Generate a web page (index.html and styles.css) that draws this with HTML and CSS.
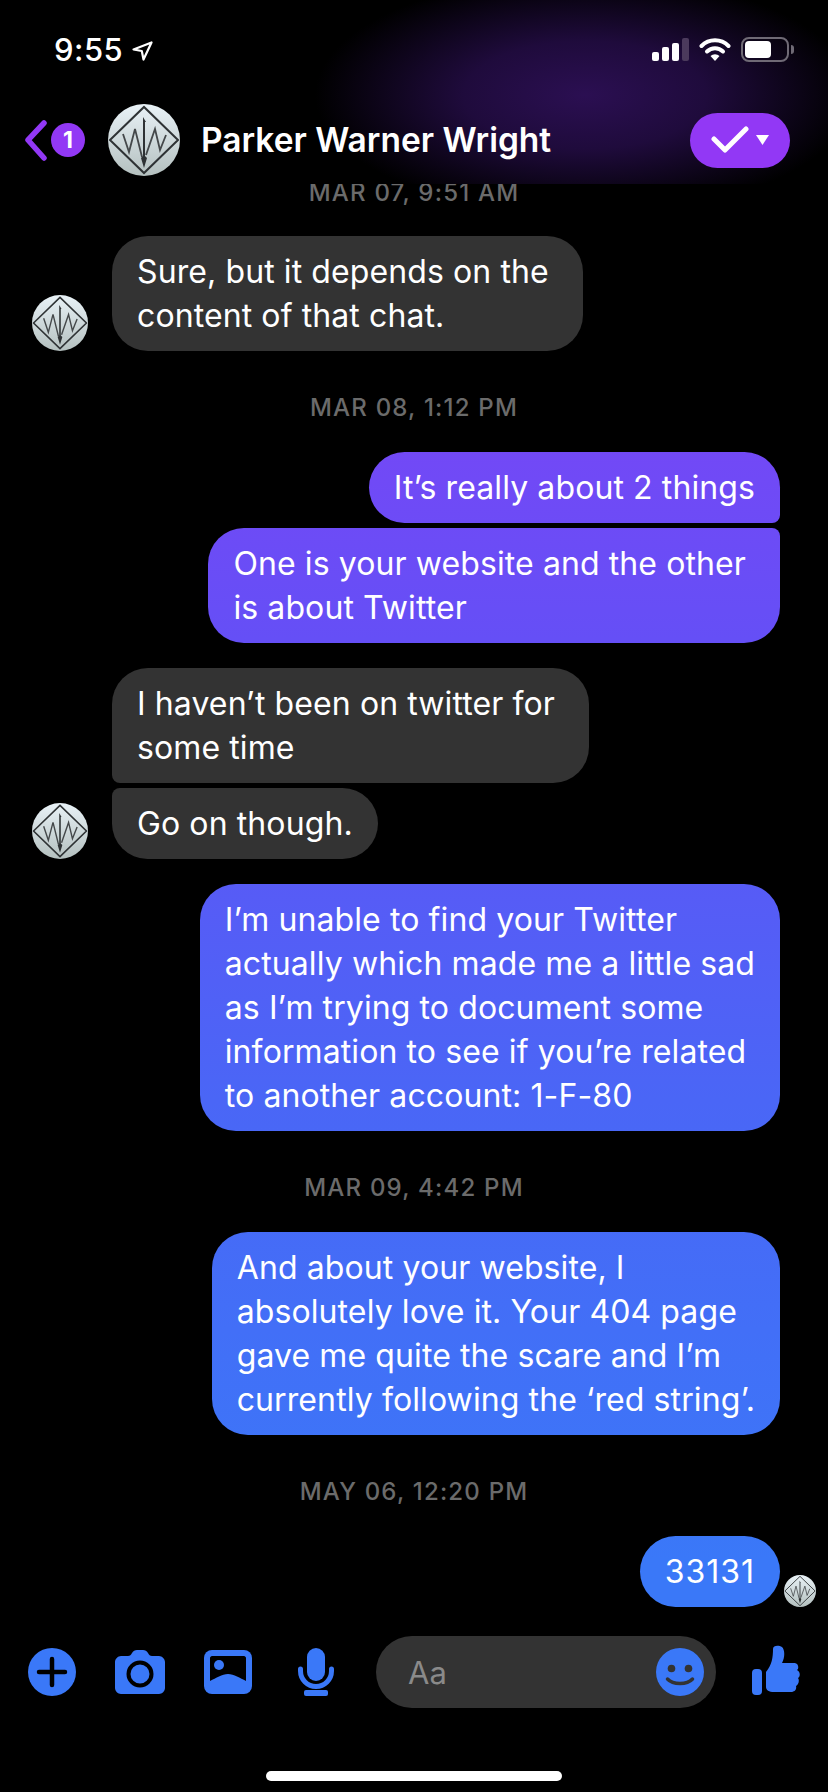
FILE: index.html
```html
<!DOCTYPE html>
<html lang="en">
<head>
  <meta charset="UTF-8">
  <meta name="viewport" content="width=device-width, initial-scale=1.0">
  <title>Parker Warner Wright</title>
  <link rel="stylesheet" href="styles.css">
</head>
<body>
  <svg class="defs" width="0" height="0" aria-hidden="true">
    <defs>
      <linearGradient id="logoFill" x1="0" y1="0" x2="0" y2="1">
        <stop offset="0" stop-color="#e9f2f7"/>
        <stop offset="1" stop-color="#b4c0bf"/>
      </linearGradient>
      <symbol id="logo" viewBox="0 0 72 72">
        <circle cx="36" cy="36" r="36" fill="url(#logoFill)"/>
        <polygon points="2,36 36,3 70,36 36,69" fill="none" stroke="#2e3234" stroke-width="2"/>
        <polyline points="15,30 21,48 27,25 34,53" fill="none" stroke="#44484a" stroke-width="1.8"/>
        <polyline points="38,51 47,25 52,46 58,31" fill="none" stroke="#44484a" stroke-width="1.8"/>
        <path d="M35 13 L38 18 L37 18 L37 52 L39 54 L36 64 L33 54 L35 52 Z" fill="#2e3234"/>
      </symbol>
    </defs>
  </svg>

  <div class="top">
    <div class="status">
      <div class="clock">
        <span>9:55</span>
        <svg width="21" height="20" viewBox="0 0 21 20"><path d="M1.5 8.5 L19.5 1.5 L11.5 18.5 L9.8 10 Z" fill="none" stroke="#fff" stroke-width="2.2" stroke-linejoin="round"/></svg>
      </div>
      <div class="indicators">
        <div class="signal">
          <i class="bar1"></i><i class="bar2"></i><i class="bar3"></i><i class="bar4"></i>
        </div>
        <svg width="32" height="24" viewBox="0 0 32 24">
          <path d="M2.5 9 A19 19 0 0 1 29.5 9" fill="none" stroke="#fff" stroke-width="4" stroke-linecap="round"/>
          <path d="M8 14.5 A11.5 11.5 0 0 1 24 14.5" fill="none" stroke="#fff" stroke-width="4" stroke-linecap="round"/>
          <path d="M11.5 19 A6.5 6.5 0 0 1 20.500 19 L16 24 Z" fill="#fff"/>
        </svg>
        <div class="battery"><div class="charge"></div></div>
      </div>
    </div>
    <header class="chat-head">
      <svg class="chevron" width="24" height="42" viewBox="0 0 24 42"><polyline points="20,3 4,20 20,38" fill="none" stroke="#9238f5" stroke-width="5.500" stroke-linecap="round" stroke-linejoin="round"/></svg>
      <span class="badge">1</span>
      <svg class="head-avatar"><use href="#logo"/></svg>
      <h1 class="name">Parker Warner Wright</h1>
      <div class="pill">
        <svg width="38" height="28" viewBox="0 0 38 28"><polyline points="3,13 14,24 35,3" fill="none" stroke="#fff" stroke-width="5" stroke-linecap="round" stroke-linejoin="round"/></svg>
        <svg width="13" height="10" viewBox="0 0 13 10"><path d="M0 0 H13 L6.500 10 Z" fill="#fff"/></svg>
      </div>
    </header>
  </div>

  <main class="chat">
    <div class="date first">MAR 07, 9:51 AM</div>
    <div class="row in">
      <svg class="avatar"><use href="#logo"/></svg>
      <div class="bubble grey loose">Sure, but it depends on the<br>content of that chat.</div>
    </div>

    <div class="date">MAR 08, 1:12 PM</div>
    <div class="row out">
      <div class="bubble blue join-below-r">It’s really about 2 things</div>
    </div>
    <div class="row out close">
      <div class="bubble blue loose join-above-r">One is your website and the other<br>is about Twitter</div>
    </div>
    <div class="row in spaced">
      <div class="avatar-gap"></div>
      <div class="bubble grey loose join-below-l">I haven’t been on twitter for<br>some time</div>
    </div>
    <div class="row in close">
      <svg class="avatar"><use href="#logo"/></svg>
      <div class="bubble grey join-above-l">Go on though.</div>
    </div>
    <div class="row out spaced">
      <div class="bubble blue">I’m unable to find your Twitter<br>actually which made me a little sad<br>as I’m trying to document some<br>information to see if you’re related<br>to another account: 1-F-80</div>
    </div>

    <div class="date">MAR 09, 4:42 PM</div>
    <div class="row out">
      <div class="bubble blue">And about your website, I<br>absolutely love it. Your 404 page<br>gave me quite the scare and I’m<br>currently following the ‘red string’.</div>
    </div>

    <div class="date">MAY 06, 12:20 PM</div>
    <div class="row out seen">
      <div class="bubble blue digits">33131</div>
      <svg class="seen-avatar"><use href="#logo"/></svg>
    </div>
  </main>

  <footer class="composer">
    <div class="tool">
      <svg width="48" height="48" viewBox="0 0 48 48"><circle cx="24" cy="24" r="24" fill="#3a78f8"/><path d="M11 24 H37 M24 11 V37" stroke="#000" stroke-width="4.500" stroke-linecap="round"/></svg>
    </div>
    <div class="tool">
      <svg width="50" height="44" viewBox="0 0 50 44"><path d="M6 6 H13 C15 6 16 5 17 3 C18 1 20 0 22 0 H28 C30 0 32 1 33 3 C34 5 35 6 37 6 H44 C47 6 50 9 50 12 V38 C50 41 47 44 44 44 H6 C3 44 0 41 0 38 V12 C0 9 3 6 6 6 Z" fill="#3a78f8"/><circle cx="25" cy="24" r="11.500" fill="none" stroke="#000" stroke-width="4"/></svg>
    </div>
    <div class="tool">
      <svg width="48" height="44" viewBox="0 0 48 44"><rect width="48" height="44" rx="8" fill="#3a78f8"/><path d="M8 6 H40 C41 6 42 7 42 8 V31 C36 28 30 24 24 24 C18 24 12 28 6 31 V8 C6 7 7 6 8 6 Z" fill="#000"/><circle cx="15" cy="15" r="5" fill="#3a78f8"/></svg>
    </div>
    <div class="tool">
      <svg width="36" height="48" viewBox="0 0 36 48"><rect x="9" y="0" width="18" height="33" rx="9" fill="#3a78f8"/><path d="M2.500 21 V23 A15.500 15.500 0 0 0 33.500 23 V21" fill="none" stroke="#3a78f8" stroke-width="5" stroke-linecap="round"/><rect x="6" y="42" width="24" height="6" rx="2" fill="#3a78f8"/></svg>
    </div>
    <div class="input">
      <span class="placeholder">Aa</span>
      <svg width="48" height="48" viewBox="0 0 48 48"><circle cx="24" cy="24" r="24" fill="#3a78f8"/><circle cx="15.500" cy="20.500" r="3.800" fill="#333"/><circle cx="32.500" cy="20.500" r="3.800" fill="#333"/><path d="M11.500 31 C17 37 31 37 36.500 31" fill="none" stroke="#333" stroke-width="3.500" stroke-linecap="round"/></svg>
    </div>
    <div class="like">
      <svg width="48" height="50" viewBox="0 0 48 50"><rect x="0" y="24" width="10" height="26" rx="4" fill="#3a78f8"/><path d="M14 27 C20 20 21 12 21 4 C21 0 27 0 30 2 C33 5 33 12 30 18 L42 18 C47 18 47 24 45 25 C49 27 48 32 46 33 C48 36 46 40 44 41 C45 45 42 47 39 47 L22 47 C17 47 14 45 14 42 Z" fill="#3a78f8"/></svg>
    </div>
  </footer>

  <div class="home-bar"><div class="home-line"></div></div>
</body>
</html>
```

FILE: styles.css
```css
* {
  box-sizing: border-box;
}
html, body {
  margin: 0;
  height: 100%;
}
body {
  display: flex;
  flex-direction: column;
  height: 1792px;
  overflow: hidden;
  background: #000;
  color: #fff;
  font-family: Inter, "Noto Sans", "Liberation Sans", sans-serif;
}
.defs {
  position: absolute;
}

/* top bar */
.top {
  height: 184px;
  flex: none;
  background: radial-gradient(ellipse 270px 120px at 585px 95px, #2b0f52 0%, #1f0b3c 45%, #000 100%);
}
.status {
  display: flex;
  justify-content: space-between;
  align-items: flex-start;
  padding: 32px 39px 0 54px;
  height: 104px;
}
.clock {
  display: flex;
  align-items: center;
  gap: 9px;
  font-size: 31px;
  font-weight: 500;
  letter-spacing: 0.5px;
  line-height: 36px;
}
.clock svg {
  margin-top: 2px;
}
.indicators {
  display: flex;
  align-items: flex-start;
  gap: 10px;
  padding-top: 5px;
}
.signal {
  display: flex;
  align-items: flex-end;
  gap: 3px;
  height: 24px;
}
.signal i {
  display: block;
  width: 7px;
  background: #fff;
  border-radius: 2px;
}
.bar1 { height: 9px; }
.bar2 { height: 14px; }
.bar3 { height: 18px; }
.signal .bar4 { height: 23px; background: #4b3a5c; }
.battery {
  position: relative;
  width: 48px;
  height: 25px;
  padding: 2px;
  border: 2px solid #6f6a75;
  border-radius: 8px;
}
.battery::after {
  content: "";
  position: absolute;
  top: 6px;
  right: -7px;
  width: 3px;
  height: 9px;
  background: #6f6a75;
  border-radius: 0 3px 3px 0;
}
.charge {
  width: 26px;
  height: 17px;
  background: #fff;
  border-radius: 4px;
}
.chat-head {
  display: flex;
  align-items: center;
  height: 72px;
  padding: 0 38px 0 24px;
}
.chevron {
  flex: none;
  margin-top: 1px;
}
.badge {
  flex: none;
  width: 34px;
  height: 34px;
  margin: 0 0 0 3px;
  border-radius: 50%;
  background: #9238f5;
  font-size: 23px;
  font-weight: 700;
  line-height: 34px;
  text-align: center;
}
.head-avatar {
  flex: none;
  width: 72px;
  height: 72px;
  margin-left: 23px;
}
.name {
  flex: 1;
  margin: 0 0 0 21px;
  font-size: 33.500px;
  font-weight: 600;
  white-space: nowrap;
}
.pill {
  display: flex;
  align-items: center;
  justify-content: center;
  gap: 7px;
  flex: none;
  width: 100px;
  height: 55px;
  border-radius: 28px;
  background: #9238f5;
}

/* messages */
.chat {
  flex: 1;
  min-height: 0;
  overflow: hidden;
}
.date {
  height: 30px;
  margin: 42px 0 29px;
  color: #6b6b6b;
  font-size: 24px;
  font-weight: 500;
  letter-spacing: 1.2px;
  line-height: 30px;
  text-align: center;
}
.date.first {
  margin: -6px 0 28px;
}
.row {
  display: flex;
  align-items: flex-end;
  padding: 0 48px 0 32px;
}
.row.out {
  justify-content: flex-end;
}
.row.close {
  margin-top: 5px;
}
.row.spaced {
  margin-top: 25px;
}
.row.seen {
  gap: 4px;
  padding-right: 12px;
}
.avatar,
.avatar-gap {
  flex: none;
  width: 56px;
  height: 56px;
  margin-right: 24px;
}
.seen-avatar {
  flex: none;
  width: 32px;
  height: 32px;
}
.bubble {
  padding: 14px 25px 13px;
  border-radius: 36px;
  font-size: 32px;
  letter-spacing: 0.1px;
  line-height: 44px;
  white-space: nowrap;
}
.bubble.loose {
  padding-right: 34px;
}
.bubble.digits {
  letter-spacing: 1px;
}
.grey {
  background: #333;
}
.blue {
  background: linear-gradient(180deg, #8f35f6 0, #7448f6 420px, #654ff6 640px, #4a66f6 1100px, #3a78f8 1560px) fixed;
}
.join-below-r { border-bottom-right-radius: 8px; }
.join-above-r { border-top-right-radius: 8px; }
.join-below-l { border-bottom-left-radius: 8px; }
.join-above-l { border-top-left-radius: 8px; }

/* composer */
.composer {
  display: flex;
  align-items: center;
  flex: none;
  height: 72px;
  margin-bottom: 28px;
  padding-left: 8px;
}
.tool {
  display: flex;
  justify-content: center;
  width: 88px;
  flex: none;
}
.input {
  display: flex;
  align-items: center;
  justify-content: space-between;
  width: 340px;
  height: 72px;
  margin-left: 16px;
  padding: 0 12px 0 32px;
  border-radius: 36px;
  background: #333;
}
.placeholder {
  color: #8a8a8a;
  font-size: 31px;
}
.like {
  margin-left: 36px;
}
.home-bar {
  display: flex;
  justify-content: center;
  flex: none;
  height: 84px;
  margin-top: -28px;
  padding-top: 63px;
}
.home-line {
  width: 296px;
  height: 10px;
  border-radius: 5px;
  background: #fff;
}
```
